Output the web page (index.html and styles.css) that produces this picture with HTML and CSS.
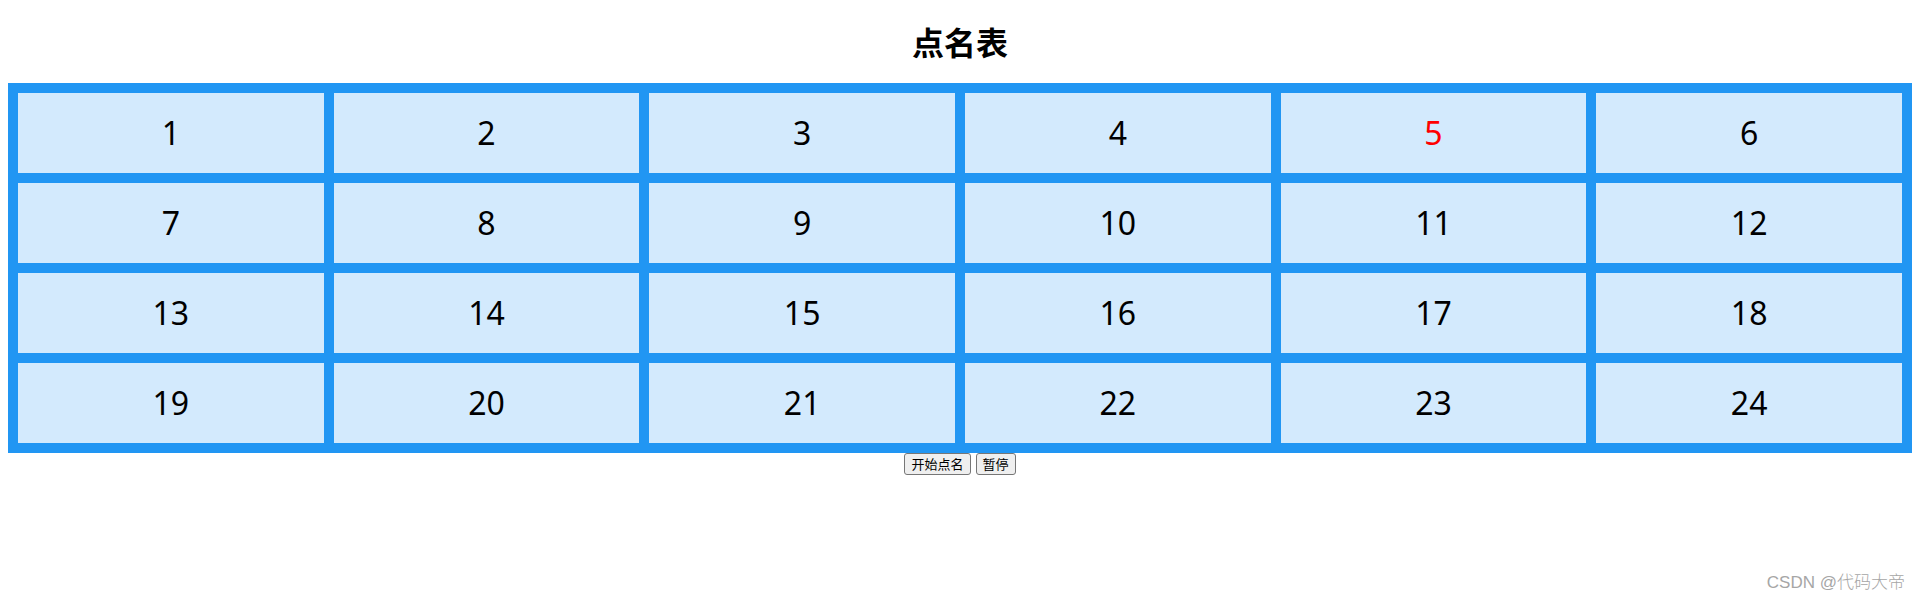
FILE: index.html
```html
<!DOCTYPE html>
<html lang="zh-CN">
<head>
<meta charset="utf-8">
<title>点名表</title>
<link rel="stylesheet" href="styles.css">
</head>
<body>
<div class="page">
  <h1 class="title">点名表</h1>
  <div class="board">
    <div class="cell">1</div>
    <div class="cell">2</div>
    <div class="cell">3</div>
    <div class="cell">4</div>
    <div class="cell active">5</div>
    <div class="cell">6</div>
    <div class="cell">7</div>
    <div class="cell">8</div>
    <div class="cell">9</div>
    <div class="cell">10</div>
    <div class="cell">11</div>
    <div class="cell">12</div>
    <div class="cell">13</div>
    <div class="cell">14</div>
    <div class="cell">15</div>
    <div class="cell">16</div>
    <div class="cell">17</div>
    <div class="cell">18</div>
    <div class="cell">19</div>
    <div class="cell">20</div>
    <div class="cell">21</div>
    <div class="cell">22</div>
    <div class="cell">23</div>
    <div class="cell">24</div>
  </div>
  <div class="controls">
    <button class="btn" type="button">开始点名</button>
    <button class="btn" type="button">暂停</button>
  </div>
</div>
<div class="watermark">CSDN @代码大帝</div>
</body>
</html>
```

FILE: styles.css
```css
html, body {
  margin: 0;
  padding: 0;
  background: #ffffff;
}

body {
  font-family: "Noto Sans", "Noto Sans CJK SC", sans-serif;
  color: #000000;
  height: 602px;
  overflow: hidden;
}

.page {
  padding: 0 8px;
}

.title {
  margin: 20px 0 21px;
  font-size: 32px;
  line-height: 42px;
  font-weight: 700;
  text-align: center;
  font-family: "Noto Sans CJK SC", sans-serif;
}

.board {
  display: grid;
  grid-template-columns: repeat(6, 1fr);
  grid-auto-rows: 80px;
  gap: 10px;
  padding: 10px;
  background: #2196f3;
}

.cell {
  background: #d3eafd;
  display: flex;
  align-items: center;
  justify-content: center;
  font-size: 32px;
  line-height: 1;
}

.cell.active {
  color: #ff0000;
}

.controls {
  display: flex;
  justify-content: center;
  gap: 5px;
}

.btn {
  font-family: "Noto Sans CJK SC", sans-serif;
  font-size: 13px;
  line-height: 16px;
  padding: 1px 6px;
  border: 1px solid #767676;
  border-radius: 3px;
  background: #efefef;
  color: #000;
  height: 22px;
}

.watermark {
  position: absolute;
  right: 15px;
  bottom: 9px;
  font-family: "Liberation Sans", "Noto Sans CJK SC", sans-serif;
  font-size: 17px;
  line-height: 20px;
  font-weight: 300;
  color: #a6a6a6;
}
```
